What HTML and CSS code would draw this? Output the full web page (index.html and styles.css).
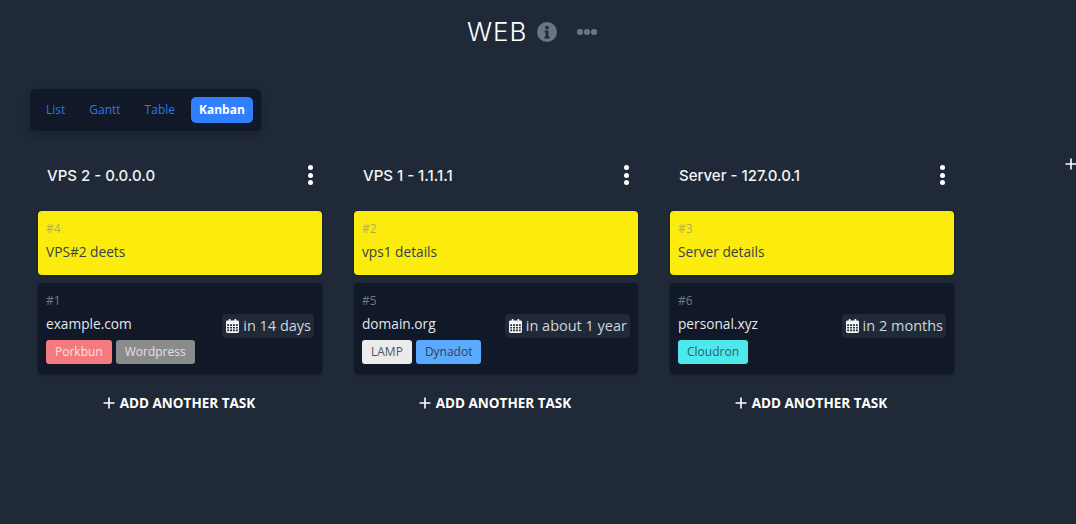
FILE: index.html
```html
<!DOCTYPE html>
<html lang="en">
<head>
<meta charset="utf-8">
<title>WEB</title>
<link rel="stylesheet" href="styles.css">
</head>
<body>
<header class="title-row">
  <h1 class="title">WEB</h1>
  <svg class="info" viewBox="0 0 20 20" width="20" height="20"><circle cx="10" cy="10" r="10" fill="#6b7484"/><circle cx="10" cy="5.6" r="1.9" fill="#1f2937"/><path d="M7.6 8.6h3.8v6h1.2v1.9H7.4v-1.9h1.3v-4.1H7.6z" fill="#1f2937"/></svg>
  <span class="dots"><i></i><i></i><i></i></span>
</header>
<nav class="tabs">
  <a class="tab">List</a>
  <a class="tab">Gantt</a>
  <a class="tab">Table</a>
  <a class="tab active">Kanban</a>
</nav>
<main class="board">
  <section class="column">
    <div class="col-head"><h2>VPS 2 - 0.0.0.0</h2><span class="kebab"><i></i><i></i><i></i></span></div>
    <article class="card yellow"><div class="num">#4</div><div class="name">VPS#2 deets</div></article>
    <article class="card">
      <div class="num">#1</div>
      <div class="row">
        <div class="name">example.com</div>
        <span class="due"><svg class="cal" viewBox="0 0 14 15" width="13" height="14"><use href="#cal"/></svg>in 14 days</span>
      </div>
      <div class="tags"><span class="tag porkbun">Porkbun</span><span class="tag wordpress">Wordpress</span></div>
    </article>
    <button class="add"><svg viewBox="0 0 12 12" width="12" height="12"><path d="M6 .5v11M.5 6h11" stroke="#fff" stroke-width="1.6"/></svg>ADD ANOTHER TASK</button>
  </section>
  <section class="column">
    <div class="col-head"><h2>VPS 1 - 1.1.1.1</h2><span class="kebab"><i></i><i></i><i></i></span></div>
    <article class="card yellow"><div class="num">#2</div><div class="name">vps1 details</div></article>
    <article class="card">
      <div class="num">#5</div>
      <div class="row">
        <div class="name">domain.org</div>
        <span class="due"><svg class="cal" viewBox="0 0 14 15" width="13" height="14"><use href="#cal"/></svg>in about 1 year</span>
      </div>
      <div class="tags"><span class="tag lamp">LAMP</span><span class="tag dynadot">Dynadot</span></div>
    </article>
    <button class="add"><svg viewBox="0 0 12 12" width="12" height="12"><path d="M6 .5v11M.5 6h11" stroke="#fff" stroke-width="1.6"/></svg>ADD ANOTHER TASK</button>
  </section>
  <section class="column">
    <div class="col-head"><h2>Server - 127.0.0.1</h2><span class="kebab"><i></i><i></i><i></i></span></div>
    <article class="card yellow"><div class="num">#3</div><div class="name">Server details</div></article>
    <article class="card">
      <div class="num">#6</div>
      <div class="row">
        <div class="name">personal.xyz</div>
        <span class="due"><svg class="cal" viewBox="0 0 14 15" width="13" height="14"><use href="#cal"/></svg>in 2 months</span>
      </div>
      <div class="tags"><span class="tag cloudron">Cloudron</span></div>
    </article>
    <button class="add"><svg viewBox="0 0 12 12" width="12" height="12"><path d="M6 .5v11M.5 6h11" stroke="#fff" stroke-width="1.6"/></svg>ADD ANOTHER TASK</button>
  </section>
  <div class="add-col"><svg viewBox="0 0 12 12" width="12" height="12"><path d="M6 .5v11M.5 6h11" stroke="#fff" stroke-width="1.6"/></svg></div>
</main>
<svg class="defs" width="0" height="0">
  <symbol id="cal" viewBox="0 0 14 15">
    <path fill="#f5f6f8" fill-rule="evenodd" d="M3 0h1.800v1.600h4.400V0H11v1.600h1.500A1.500 1.500 0 0 1 14 3.100V13.500A1.500 1.500 0 0 1 12.500 15h-11A1.500 1.500 0 0 1 0 13.500V3.100A1.500 1.500 0 0 1 1.500 1.600H3zM1.300 5.700v1.700h2v-1.700zm3.100 0v1.700h2.100v-1.700zm3.100 0v1.700h2.100v-1.700zm3.200 0v1.700h2v-1.700zM1.300 8.500v1.700h2v-1.700zm3.100 0v1.700h2.100v-1.700zm3.100 0v1.700h2.100v-1.700zm3.200 0v1.700h2v-1.700zM1.300 11.300v1.800h2v-1.800zm3.100 0v1.800h2.100v-1.800zm3.100 0v1.800h2.100v-1.800zm3.200 0v1.800h2v-1.800z"/>
  </symbol>
</svg>
</body>
</html>
```
FILE: styles.css
```css
* { box-sizing: border-box; }
html, body { height: 100%; }
body {
  margin: 0;
  background: #1f2937;
  color: #fff;
  font-family: "Open Sans", "Noto Sans", sans-serif;
  font-size: 14px;
  overflow: hidden;
  width: 1076px;
  height: 524px;
}
.title-row {
  display: flex;
  align-items: center;
  justify-content: center;
  gap: 10px;
  height: 64px;
  padding-right: 12px;
}
.title {
  margin: 0;
  font-family: "Inter", sans-serif;
  font-weight: 300;
  font-size: 26px;
  letter-spacing: 1px;
  line-height: 64px;
}
.dots { display: flex; gap: 1.5px; margin-left: 10px; }
.dots i { width: 5.500px; height: 5.500px; border-radius: 50%; background: #6b7484; }
.tabs {
  display: flex;
  align-items: center;
  gap: 8px;
  width: 231px;
  height: 42px;
  margin: 25px 0 0 30px;
  padding: 0 8px;
  background: #111827;
  border-radius: 5px;
  box-shadow: 0 4px 8px rgba(0,0,0,.18);
}
.tab {
  padding: 0 8px;
  height: 26px;
  line-height: 26px;
  font-size: 12px;
  color: #2b78e8;
  border-radius: 5px;
}
.tab.active {
  background: #2f7fff;
  color: #fff;
  font-weight: 700;
}
.board {
  display: flex;
  gap: 32px;
  margin: 20px 0 0 38px;
  width: 1038px;
}
.column { flex: 0 0 284px; }
.col-head {
  display: flex;
  align-items: center;
  justify-content: space-between;
  height: 48px;
  padding: 0 9px;
  margin-bottom: 12px;
}
.col-head h2 {
  margin: 0;
  font-family: "Inter", sans-serif;
  font-weight: 500;
  font-size: 15px;
  color: #f3f4f6;
}
.kebab { display: flex; flex-direction: column; gap: 2.500px; }
.kebab i { width: 5px; height: 5px; border-radius: 50%; background: #fff; }
.card {
  padding: 10px 8px 10px;
  border-radius: 4px;
  background: #111827;
  margin-bottom: 8px;
  box-shadow: 0 1px 3px rgba(0,0,0,.2);
}
.card.yellow { background: #fcec0d; height: 64px; }
.num { font-size: 12px; line-height: 16px; color: #737880; }
.yellow .num { color: #b5b14a; }
.name { font-size: 13.700px; line-height: 20px; color: #e5e7eb; margin-top: 5px; }
.yellow .name { color: #374151; }
.row { display: flex; justify-content: space-between; align-items: flex-start; }
.due {
  display: flex;
  align-items: center;
  gap: 4px;
  height: 24px;
  margin-top: 5px;
  padding: 0 3px 1px 4px;
  border-radius: 4px;
  background: #1f2937;
  color: #d1d5db;
  font-size: 14.500px;
  white-space: nowrap;
}
.cal { display: block; margin-top: 1px; }
.tags { display: flex; gap: 4px; margin-top: 2px; }
.tag {
  height: 24px;
  line-height: 24px;
  padding: 0 9px;
  border-radius: 3px;
  font-size: 12px;
}
.porkbun { background: #f47a7e; color: #f3e3e3; }
.wordpress { background: #8b8b8b; color: #e2e2e2; }
.lamp { background: #ebebeb; color: #4b5563; }
.dynadot { background: #5aabff; color: #374151; }
.cloudron { background: #4ee9ea; color: #2f5d6b; }
.add {
  display: flex;
  align-items: center;
  justify-content: center;
  gap: 5px;
  width: 100%;
  height: 42px;
  background: none;
  border: 0;
  padding: 0 2px 1px 0;
  color: #fff;
  font-family: inherit;
  font-weight: 700;
  font-size: 13.500px;
}
.add-col {
  flex: 0 0 auto;
  margin: 4px 0 0 79px;
}
.defs { position: absolute; }
```
